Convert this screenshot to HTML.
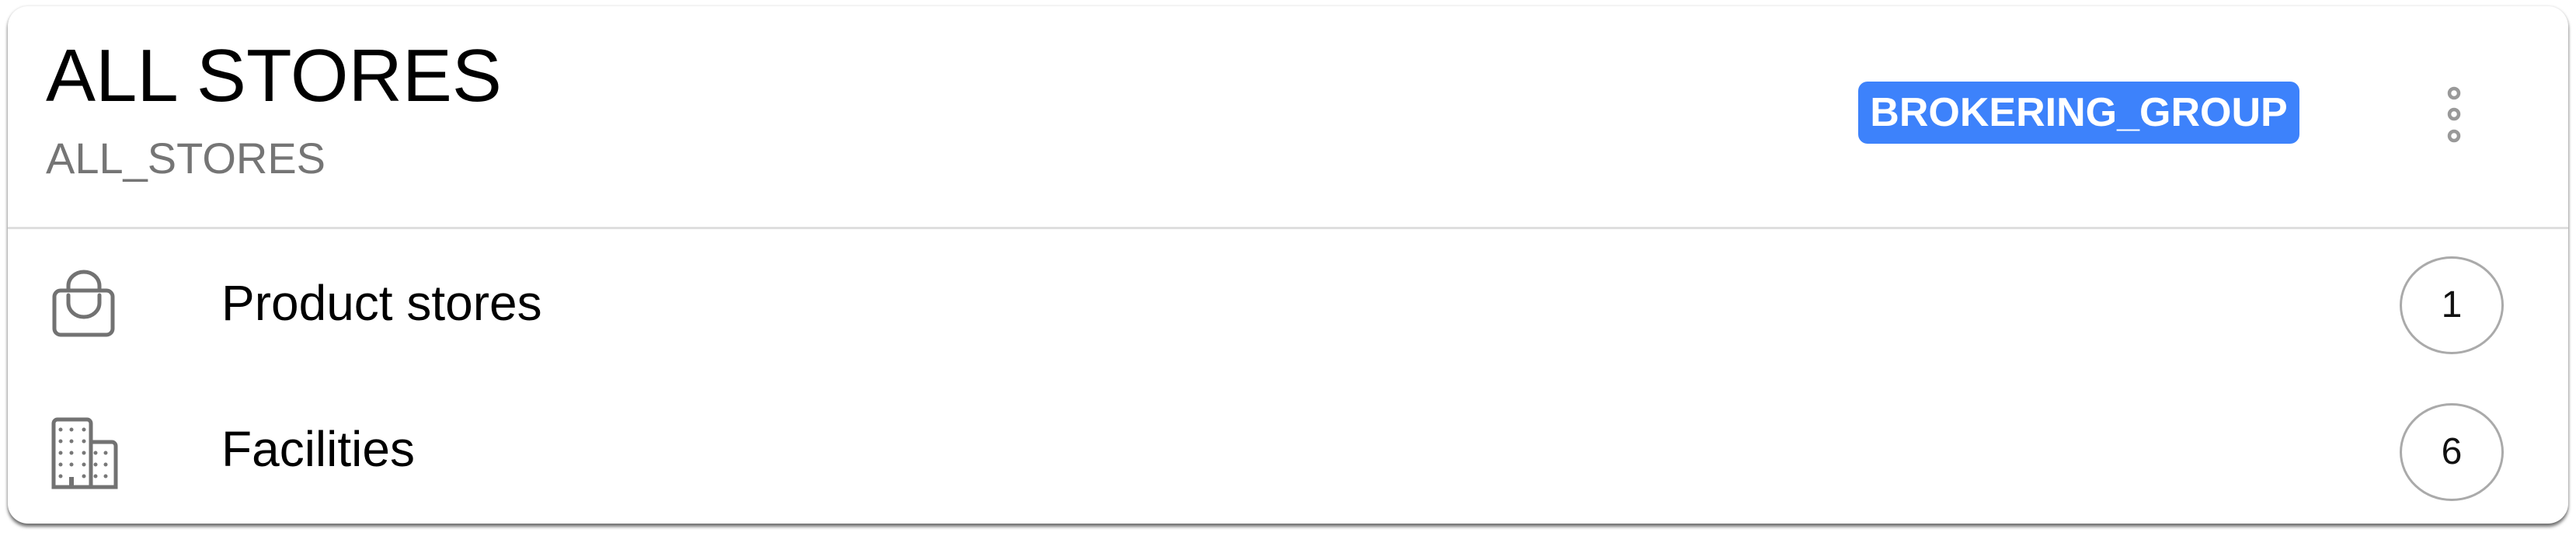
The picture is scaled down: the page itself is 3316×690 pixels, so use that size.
<!DOCTYPE html>
<html><head><style>
html,body{margin:0;padding:0;background:#fff;width:3316px;height:690px;overflow:hidden;font-family:"Liberation Sans",sans-serif}
.card{position:absolute;left:10px;top:8px;width:3296px;height:666px;border-radius:26px;background:#fff;box-shadow:0 4px 4px rgba(0,0,0,.55),0 0 3px rgba(0,0,0,.15)}
.t{position:absolute;white-space:nowrap}
.div{position:absolute;left:10px;top:292px;width:3296px;height:3px;background:#dedede}
.badge{position:absolute;left:2392px;top:105px;width:568px;height:80px;border-radius:12px;background:#3d82fb;color:#fff;font-weight:bold;font-size:52px;line-height:80px;text-align:center}
.cnt{position:absolute;left:3089px;width:134px;height:126px;border:3px solid #aaa;border-radius:50%;box-sizing:border-box;font-size:48px;line-height:120px;text-align:center;color:#111}
</style></head><body>
<div class="card"></div>
<div class="t" style="left:59px;top:43px;font-size:96px;line-height:110px;color:#000">ALL STORES</div>
<div class="t" style="left:59px;top:172px;font-size:56px;line-height:64px;color:#757575">ALL_STORES</div>
<div class="div"></div>
<div class="badge">BROKERING_GROUP</div>
<svg style="position:absolute;left:0;top:0" width="3316" height="690">
<g fill="none" stroke="#999" stroke-width="4.5"><circle cx="3159" cy="120" r="6"/><circle cx="3159" cy="147" r="6"/><circle cx="3159" cy="175" r="6"/></g>
<g fill="none" stroke="#727272" stroke-width="5" stroke-linecap="round">
<rect x="70" y="374" width="75" height="57" rx="8"/>
<path d="M88 374 V368 a20 18 0 0 1 40 0 V374"/>
<path d="M88 380 V390 a20 18 0 0 0 40 0 V380"/>
</g>
<g fill="none" stroke="#727272" stroke-width="5">
<path d="M69 627 V545 a5 5 0 0 1 5 -5 H112 a5 5 0 0 1 5 5 V627 Z"/>
<path d="M117 569 H144 a5 5 0 0 1 5 5 V627 H117"/>
<path d="M92 627 V614" stroke-width="6"/>
</g>
<g fill="#777">
<circle cx="78" cy="553" r="2.5"/><circle cx="92" cy="553" r="2.5"/><circle cx="108" cy="553" r="2.5"/>
<circle cx="78" cy="568" r="2.5"/><circle cx="92" cy="568" r="2.5"/><circle cx="108" cy="568" r="2.5"/>
<circle cx="78" cy="583" r="2.5"/><circle cx="92" cy="583" r="2.5"/><circle cx="108" cy="583" r="2.5"/>
<circle cx="78" cy="598" r="2.5"/><circle cx="92" cy="598" r="2.5"/><circle cx="108" cy="598" r="2.5"/>
<circle cx="78" cy="613" r="2.5"/><circle cx="108" cy="613" r="2.5"/>
<circle cx="123" cy="583" r="2.5"/><circle cx="136" cy="583" r="2.5"/>
<circle cx="123" cy="598" r="2.5"/><circle cx="136" cy="598" r="2.5"/>
<circle cx="123" cy="613" r="2.5"/><circle cx="136" cy="613" r="2.5"/>
</g>
</svg>
<div class="t" style="left:285px;top:353px;font-size:64px;line-height:74px;color:#000">Product stores</div>
<div class="t" style="left:285px;top:541px;font-size:64px;line-height:74px;color:#000">Facilities</div>
<div class="cnt" style="top:330px">1</div>
<div class="cnt" style="top:519px">6</div>
</body></html>
